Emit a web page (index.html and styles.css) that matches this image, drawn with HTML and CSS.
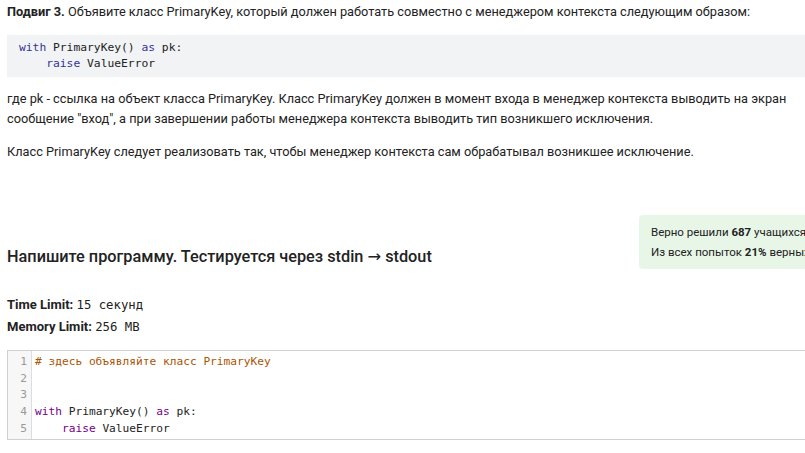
FILE: index.html
```html
<!DOCTYPE html>
<html lang="ru">
<head>
<meta charset="utf-8">
<link rel="stylesheet" href="styles.css">
</head>
<body>
<div class="page">
  <p class="text"><b>Подвиг 3.</b> Объявите класс PrimaryKey, который должен работать совместно с менеджером контекста следующим образом:</p>
  <pre class="snippet"><span class="kw">with</span> PrimaryKey() <span class="kw">as</span> pk:
    <span class="kw">raise</span> ValueError</pre>
  <p class="text">где pk - ссылка на объект класса PrimaryKey. Класс PrimaryKey должен в момент входа в менеджер контекста выводить на экран сообщение "вход", а при завершении работы менеджера контекста выводить тип возникшего исключения.</p>
  <p class="text">Класс PrimaryKey следует реализовать так, чтобы менеджер контекста сам обрабатывал возникшее исключение.</p>

  <div class="task-row">
    <h2 class="task-title">Напишите программу. Тестируется через stdin <span class="arrow">→</span> stdout</h2>
    <div class="stats">
      <div>Верно решили <b>687</b> учащихся</div>
      <div>Из всех попыток <b>21%</b> верных</div>
    </div>
  </div>

  <div class="limits">
    <div><b>Time Limit:</b> <span class="mono">15 секунд</span></div>
    <div><b>Memory Limit:</b> <span class="mono">256 MB</span></div>
  </div>

  <div class="editor">
    <div class="gutter">
      <div>1</div><div>2</div><div>3</div><div>4</div><div>5</div>
    </div>
    <pre class="code"><span class="cm"># здесь объявляйте класс PrimaryKey</span>


<span class="ekw">with</span> PrimaryKey() <span class="ekw">as</span> pk:
    <span class="ekw">raise</span> ValueError</pre>
  </div>
</div>
</body>
</html>
```

FILE: styles.css
```css
html, body {
  margin: 0;
  padding: 0;
  background: #fff;
  overflow: hidden;
}

body {
  font-family: Roboto, "Noto Sans", sans-serif;
  color: #222;
}

.page {
  width: 860px;
  padding: 2px 0 0 7px;
}

.text {
  margin: 0 0 12px;
  font-size: 12.75px;
  line-height: 20.5px;
  width: 796px;
}

.text b {
  font-weight: 700;
}

.snippet {
  margin: 0 0 12px;
  padding: 5px 12px 5px 12px;
  background: #f2f3f5;
  font-family: "DejaVu Sans Mono", monospace;
  font-size: 11.3px;
  line-height: 16px;
  color: #222;
}

.kw {
  color: #333399;
}

.task-row {
  display: flex;
  align-items: flex-end;
  justify-content: space-between;
  margin-top: 53px;
}

.task-title {
  margin: 0;
  font-size: 16.3px;
  line-height: 24px;
  font-weight: 500;
  color: #222;
}

.arrow {
  font-family: "DejaVu Sans", sans-serif;
  font-weight: 400;
}

.stats {
  width: 238px;
  margin-right: -34px;
  padding: 7px 12px;
  background: #e8f6e8;
  border-radius: 4px;
  font-size: 11.5px;
  line-height: 20px;
  white-space: nowrap;
  overflow: hidden;
}

.stats b {
  font-weight: 700;
}

.limits {
  margin-top: 25px;
  font-size: 13px;
  line-height: 21px;
}

.limits b {
  font-weight: 700;
}

.mono {
  font-family: "DejaVu Sans Mono", monospace;
  font-size: 12.3px;
}

.editor {
  display: flex;
  margin-top: 12px;
  border: 1px solid #d0d0d0;
  font-family: "DejaVu Sans Mono", monospace;
  font-size: 11.2px;
  line-height: 16.7px;
}

.gutter {
  width: 19px;
  padding: 3px 4px 1px 0;
  background: #f7f7f7;
  border-right: 1px solid #ddd;
  color: #999;
  text-align: right;
}

.code {
  margin: 0;
  padding: 3px 0 1px 3px;
  font: inherit;
  color: #222;
}

.cm {
  color: #aa5500;
}

.ekw {
  color: #770088;
}
```
